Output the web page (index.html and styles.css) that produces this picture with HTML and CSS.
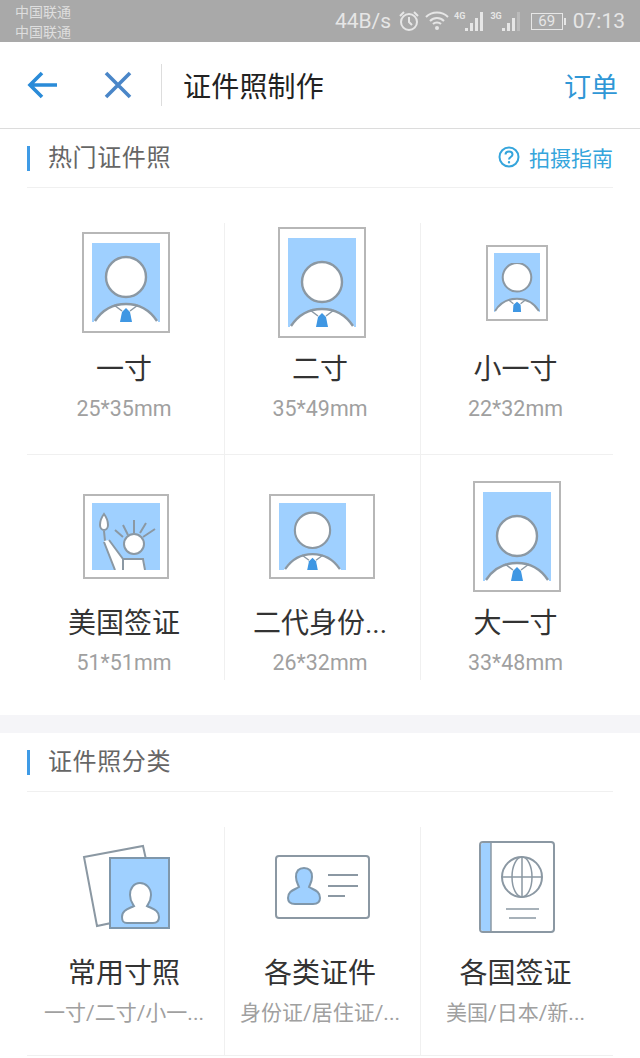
FILE: index.html
```html
<!DOCTYPE html>
<html lang="zh-CN">
<head>
    <meta charset="UTF-8">
    <meta name="viewport" content="width=device-width, initial-scale=1.0">
    <title>证件照制作</title>
    <link rel="stylesheet" href="styles.css">
</head>
<body>
    <svg class="defs" width="0" height="0">
        <symbol id="person" viewBox="0 0 68 68">
            <circle cx="34" cy="23" r="20" fill="#fff" stroke="#8b98a3" stroke-width="2.4"/>
            <path d="M2 67C10 55 21 50 34 50S58 55 66 67V68H2Z" fill="#fff"/>
            <path d="M3 67C11 55 21 50 34 50S57 55 65 67" fill="none" stroke="#8b98a3" stroke-width="2.4"/>
            <path d="M22 51L30 57M46 51L38 57" fill="none" stroke="#8b98a3" stroke-width="1.5"/>
            <path d="M28 68L30 58L34 54L38 58L40 68Z" fill="#3f97e3"/>
        </symbol>
        <symbol id="person-small" viewBox="0 0 45 48">
            <circle cx="22.5" cy="14" r="14" fill="#fff" stroke="#8b98a3" stroke-width="2"/>
            <path d="M1 47C6 39 14 35 22.5 35S39 39 44 47V48H1Z" fill="#fff"/>
            <path d="M1 47C6 39 14 35 22.5 35S39 39 44 47" fill="none" stroke="#8b98a3" stroke-width="2"/>
            <path d="M14 36L19 40M31 36L26 40" fill="none" stroke="#8b98a3" stroke-width="1.3"/>
            <path d="M18.5 48L19 41L22.5 38L26 41L26.5 48Z" fill="#3f97e3"/>
        </symbol>
    </svg>

    <div class="status-bar">
        <div class="carrier">
            <div>中国联通</div>
            <div>中国联通</div>
        </div>
        <div class="status-right">
            <span class="speed">44B/s</span>
            <svg class="alarm" width="22" height="22" viewBox="0 0 22 22" fill="none" stroke="#e6e6e6" stroke-width="2">
                <circle cx="11" cy="12" r="8"/>
                <path d="M11 7V12L14 15M2 6L6 2M20 6L16 2"/>
            </svg>
            <svg class="wifi" width="24" height="20" viewBox="0 0 24 20" fill="none" stroke="#e6e6e6" stroke-width="2">
                <path d="M1 6C7 0 17 0 23 6M5 10C9 6 15 6 19 10M8 13C10 11 14 11 16 13"/>
                <circle cx="12" cy="17" r="2" fill="#e6e6e6" stroke="none"/>
            </svg>
            <span class="net">
                <span class="net-label">4G</span>
                <svg width="20" height="22" viewBox="0 0 20 22" fill="#e6e6e6">
                    <rect x="0" y="18" width="3" height="3"/>
                    <rect x="5" y="13" width="3" height="8"/>
                    <rect x="10" y="8" width="3" height="13"/>
                    <rect x="15" y="2" width="3" height="19"/>
                </svg>
            </span>
            <span class="net">
                <span class="net-label">3G</span>
                <svg width="20" height="22" viewBox="0 0 20 22" fill="#e6e6e6">
                    <rect x="0" y="18" width="3" height="3"/>
                    <rect x="5" y="13" width="3" height="8"/>
                    <rect x="10" y="8" width="3" height="13"/>
                    <rect x="15" y="2" width="3" height="19" opacity="0.3"/>
                </svg>
            </span>
            <span class="battery"><span class="battery-num">69</span></span>
            <span class="battery-tip"></span>
            <span class="clock">07:13</span>
        </div>
    </div>

    <div class="nav">
        <svg class="nav-back" width="30" height="28" viewBox="0 0 30 28" fill="none" stroke="#2a8bd8" stroke-width="3.6">
            <path d="M15 2L3 14L15 26M3 14H30"/>
        </svg>
        <svg class="nav-close" width="28" height="28" viewBox="0 0 28 28" fill="none" stroke="#4a86c8" stroke-width="3.6">
            <path d="M2 2L26 26M26 2L2 26"/>
        </svg>
        <div class="nav-line"></div>
        <div class="nav-title">证件照制作</div>
        <div class="nav-order">订单</div>
    </div>

    <div class="section">
        <div class="section-head">
            <div class="section-title">热门证件照</div>
            <div class="guide">
                <svg width="22" height="22" viewBox="0 0 22 22" fill="none" stroke="#35a5dc" stroke-width="2">
                    <circle cx="11" cy="11" r="9.5"/>
                    <path d="M7.5 8.5C7.5 6.5 9 5.5 11 5.5S14.5 6.8 14.5 8.5C14.5 11 11 11 11 13.5"/>
                    <circle cx="11" cy="16.3" r="1.2" fill="#35a5dc" stroke="none"/>
                </svg>
                <span>拍摄指南</span>
            </div>
        </div>
        <div class="grid hot-grid">
            <div class="cell">
                <div class="cell-icon">
                    <div class="photo photo-one"><div class="photo-bg"><svg class="person"><use href="#person"/></svg></div></div>
                </div>
                <div class="cell-name">一寸</div>
                <div class="cell-size">25*35mm</div>
            </div>
            <div class="cell">
                <div class="cell-icon">
                    <div class="photo photo-two"><div class="photo-bg"><svg class="person"><use href="#person"/></svg></div></div>
                </div>
                <div class="cell-name">二寸</div>
                <div class="cell-size">35*49mm</div>
            </div>
            <div class="cell">
                <div class="cell-icon">
                    <div class="photo photo-small"><div class="photo-bg"><svg class="person"><use href="#person-small"/></svg></div></div>
                </div>
                <div class="cell-name">小一寸</div>
                <div class="cell-size">22*32mm</div>
            </div>
            <div class="cell">
                <div class="cell-icon">
                    <div class="photo photo-usa"><div class="photo-bg">
                        <svg width="68" height="66" viewBox="0 0 68 66">
                            <path d="M12 10C9 14 8 18 8 21C8 24 10 26 12 26S16 24 16 21C16 18 15 14 12 10Z" fill="#fff" stroke="#8b98a3" stroke-width="2"/>
                            <path d="M12 27L13 37" stroke="#8b98a3" stroke-width="2"/>
                            <path d="M12 37L17 36L31 55H52L53 66H23Z" fill="#fff"/>
                            <path d="M12 38L23 66M17 36L31 55V66M31 55H51L53 66" fill="none" stroke="#8b98a3" stroke-width="2"/>
                            <path d="M23 26L31 33M31 21L36 31M42 16V29M54 19L48 29M63 25L51 33" fill="none" stroke="#8b98a3" stroke-width="2"/>
                            <circle cx="42" cy="40" r="10" fill="#fff" stroke="#8b98a3" stroke-width="2"/>
                        </svg>
                    </div></div>
                </div>
                <div class="cell-name">美国签证</div>
                <div class="cell-size">51*51mm</div>
            </div>
            <div class="cell">
                <div class="cell-icon">
                    <div class="photo photo-idcard"><div class="photo-bg"><svg class="person"><use href="#person"/></svg></div></div>
                </div>
                <div class="cell-name">二代身份...</div>
                <div class="cell-size">26*32mm</div>
            </div>
            <div class="cell">
                <div class="cell-icon">
                    <div class="photo photo-big"><div class="photo-bg"><svg class="person"><use href="#person"/></svg></div></div>
                </div>
                <div class="cell-name">大一寸</div>
                <div class="cell-size">33*48mm</div>
            </div>
        </div>
    </div>

    <div class="band"></div>

    <div class="section">
        <div class="section-head">
            <div class="section-title">证件照分类</div>
        </div>
        <div class="grid type-grid">
            <div class="cell">
                <div class="cell-icon">
                    <svg width="90" height="88" viewBox="0 0 90 88">
                        <path d="M3 14L62 3L68 30L30 80L16 83Z" fill="#fff" stroke="#8b98a3" stroke-width="2"/>
                        <rect x="29" y="15" width="59" height="70" fill="#9fd0ff" stroke="#7f97ab" stroke-width="2"/>
                        <path d="M49 52C49 45 53 40 59 40S70 45 70 52C70 58 68 60 66 63C72 66 78 67 78 74C78 78 76 80 72 80H46C42 80 41 78 41 74C41 67 47 66 53 63C51 60 49 58 49 52Z" fill="#fff" stroke="#7f97ab" stroke-width="2"/>
                    </svg>
                </div>
                <div class="cell-name">常用寸照</div>
                <div class="cell-sub">一寸/二寸/小一...</div>
            </div>
            <div class="cell">
                <div class="cell-icon">
                    <svg width="95" height="64" viewBox="0 0 95 64">
                        <rect x="1" y="1" width="93" height="62" rx="3" fill="#fff" stroke="#8b98a3" stroke-width="2"/>
                        <path d="M21 22C21 16 24 13 29 13S37 16 37 22C37 27 35 29 34 32C39 35 45 36 45 43C45 48 42 49 38 49H20C16 49 13 48 13 43C13 36 19 35 24 32C23 29 21 27 21 22Z" fill="#9fd0ff" stroke="#7f97ab" stroke-width="2"/>
                        <path d="M53 20H83M53 31H83M53 41H70" fill="none" stroke="#8b98a3" stroke-width="2"/>
                    </svg>
                </div>
                <div class="cell-name">各类证件</div>
                <div class="cell-sub">身份证/居住证/...</div>
            </div>
            <div class="cell">
                <div class="cell-icon">
                    <svg width="76" height="92" viewBox="0 0 76 92">
                        <rect x="1" y="1" width="74" height="90" rx="3" fill="#fff" stroke="#8b98a3" stroke-width="2"/>
                        <path d="M2 4C2 3 3 2 4 2H12V90H4C3 90 2 89 2 88Z" fill="#9fd0ff"/>
                        <path d="M12 1V91" stroke="#8b98a3" stroke-width="1.5"/>
                        <circle cx="43" cy="36" r="20" fill="none" stroke="#8b98a3" stroke-width="2"/>
                        <ellipse cx="43" cy="36" rx="10" ry="20" fill="none" stroke="#8b98a3" stroke-width="1.5"/>
                        <path d="M43 16V56M23 36H63" fill="none" stroke="#8b98a3" stroke-width="1.5"/>
                        <path d="M27 68H60M30 77H57" fill="none" stroke="#8b98a3" stroke-width="1.5"/>
                    </svg>
                </div>
                <div class="cell-name">各国签证</div>
                <div class="cell-sub">美国/日本/新...</div>
            </div>
        </div>
    </div>
</body>
</html>
```

FILE: styles.css
```css
* {
    margin: 0;
    padding: 0;
    box-sizing: border-box;
    font-family: Roboto, "Noto Sans CJK SC", sans-serif;
}

body {
    background-color: white;
    width: 640px;
    height: 1058px;
    overflow: hidden;
}

.defs {
    display: block;
    height: 0;
}

.status-bar {
    height: 42px;
    background-color: #a9a9a9;
    padding: 0 15px;
    display: flex;
    align-items: center;
    justify-content: space-between;
    color: #e6e6e6;
}

.carrier {
    font-size: 14px;
    line-height: 20px;
    padding-top: 1px;
    color: #dedede;
}

.status-right {
    display: flex;
    align-items: center;
}

.speed {
    font-size: 21px;
    margin-right: 7px;
}

.alarm {
    margin-right: 5px;
}

.wifi {
    margin-right: 5px;
}

.net {
    display: flex;
    align-items: flex-start;
    margin-right: 5px;
}

.net-label {
    font-size: 9px;
    line-height: 12px;
    font-weight: 700;
}

.battery {
    width: 32px;
    height: 17px;
    border: 1px solid #e6e6e6;
    display: flex;
    align-items: center;
    justify-content: center;
    margin-left: 4px;
}

.battery-num {
    font-size: 15px;
    line-height: 15px;
}

.battery-tip {
    width: 2px;
    height: 7px;
    background-color: #e6e6e6;
    margin-left: 1px;
    margin-right: 7px;
}

.clock {
    font-size: 21px;
}

.nav {
    height: 87px;
    border-bottom: 1px solid #dcdcdc;
    display: flex;
    align-items: center;
    padding: 0 22px 0 27px;
}

.nav-back {
    margin-right: 47px;
}

.nav-close {
    margin-right: 29px;
}

.nav-line {
    width: 1px;
    height: 42px;
    background-color: #dddddd;
    margin-right: 21px;
}

.nav-title {
    font-size: 28px;
    letter-spacing: 0.2px;
    color: #222;
    flex: 1;
}

.nav-order {
    font-size: 27px;
    color: #2f97d6;
}

.section {
    padding: 0 27px;
}

.section-head {
    height: 59px;
    border-bottom: 1px solid #f0f0f0;
    display: flex;
    align-items: center;
    justify-content: space-between;
}

.section-title {
    font-size: 24px;
    letter-spacing: 0.6px;
    color: #666;
    border-left: 3px solid #3f9be6;
    padding-left: 18px;
    line-height: 25px;
}

.guide {
    display: flex;
    align-items: center;
    color: #35a5dc;
    font-size: 21px;
    padding-bottom: 3px;
}

.guide svg {
    margin-right: 9px;
}

.grid {
    display: grid;
    grid-template-columns: 198px 196px 192px;
    margin-top: 35px;
}

.cell {
    border-right: 1px solid #f0f0f0;
    text-align: center;
    height: 225px;
    padding-top: 22px;
}

.cell:nth-child(3n) {
    border-right: none;
}

.hot-grid {
    margin-bottom: 35px;
}

/* 第一行顶部没有留白，底部有分隔线 */
.hot-grid .cell:nth-child(-n+3) {
    height: 232px;
    padding-top: 0;
    border-bottom: 1px solid #f0f0f0;
}

.type-grid .cell {
    height: 229px;
    padding-top: 0;
    border-bottom: 1px solid #f0f0f0;
}

.band {
    height: 18px;
    background-color: #f5f5f8;
}

.cell-icon {
    height: 119px;
    display: flex;
    align-items: center;
    justify-content: center;
}

.cell:nth-child(3n+2) .cell-icon {
    padding-right: 1px;
}

.cell-name {
    font-size: 28px;
    line-height: 40px;
    margin-top: 8px;
    padding-right: 3px;
    color: #333;
}

.cell-size,
.cell-sub {
    font-size: 21.4px;
    line-height: 28px;
    margin-top: 5px;
    padding-right: 3px;
    color: #a0a0a0;
}

.cell-sub {
    font-size: 21px;
}

.cell:nth-child(3n+2) .cell-name,
.cell:nth-child(3n+2) .cell-size,
.cell:nth-child(3n+2) .cell-sub {
    padding-right: 5px;
}

.photo {
    border: 2px solid #b7b7b7;
    background-color: white;
    padding: 9px 8px;
}

.photo-bg {
    background-color: #9fd0ff;
    height: 100%;
    width: 100%;
    display: flex;
    align-items: flex-end;
}

.person {
    width: 68px;
    height: 68px;
    display: block;
}

.photo-one {
    width: 88px;
    height: 101px;
}

.photo-two {
    width: 88px;
    height: 111px;
}

.photo-big {
    width: 88px;
    height: 111px;
}

.photo-small {
    width: 62px;
    height: 76px;
    padding: 6px 6px 7px 6px;
}

.photo-small .person {
    width: 46px;
    height: 49px;
}

.photo-usa {
    width: 86px;
    height: 85px;
    padding: 7px 7px;
}

.photo-idcard {
    width: 106px;
    height: 85px;
    padding: 7px 27px 7px 8px;
}

.photo-idcard .person {
    flex-shrink: 0;
    height: 60px;
    width: 67px;
}
```
